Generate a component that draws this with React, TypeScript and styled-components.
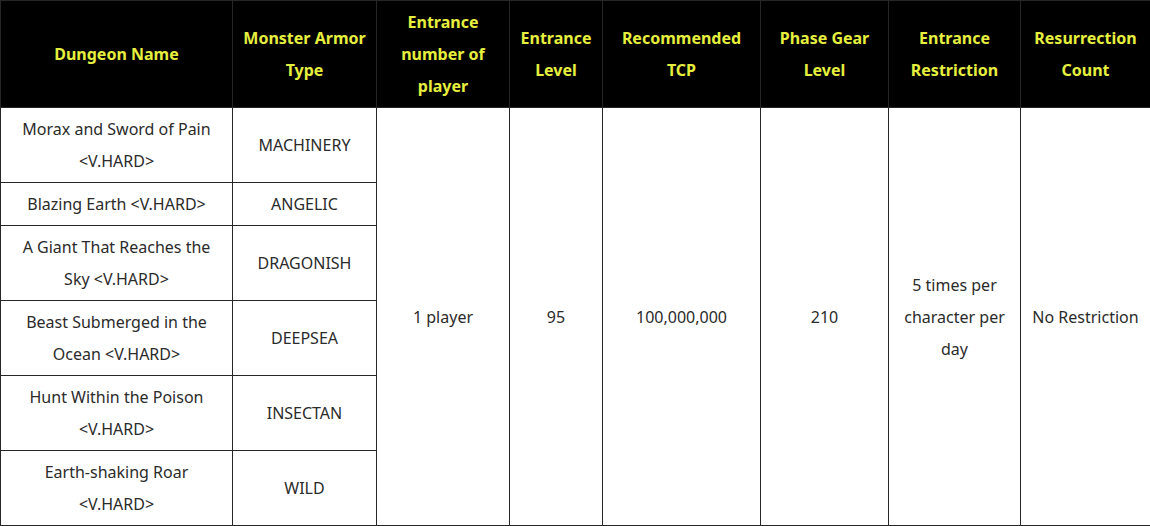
import styled, { createGlobalStyle } from 'styled-components';

const GlobalStyle = createGlobalStyle`
  html, body {
    margin: 0;
    padding: 0;
    background: #ffffff;
  }
  body {
    font-family: 'Noto Sans', 'Open Sans', sans-serif;
  }
`;

const Table = styled.table`
  width: 1150px;
  border-collapse: collapse;
  table-layout: fixed;
  font-family: 'Noto Sans', 'Open Sans', sans-serif;
  font-size: 16px;
  line-height: 32px;
  color: #2b2b2b;
`;

const HeadCell = styled.th`
  background: #000000;
  color: #e6ef3e;
  font-weight: 700;
  text-align: center;
  vertical-align: middle;
  padding: 5px 10px;
  border: 1px solid #262626;
`;

const Cell = styled.td`
  text-align: center;
  vertical-align: middle;
  padding: 5px 10px;
  border: 1px solid #262626;
  background: #ffffff;
`;

interface Dungeon {
  name: string;
  armor: string;
}

const dungeons: Dungeon[] = [
  { name: 'Morax and Sword of Pain <V.HARD>', armor: 'MACHINERY' },
  { name: 'Blazing Earth <V.HARD>', armor: 'ANGELIC' },
  { name: 'A Giant That Reaches the Sky <V.HARD>', armor: 'DRAGONISH' },
  { name: 'Beast Submerged in the Ocean <V.HARD>', armor: 'DEEPSEA' },
  { name: 'Hunt Within the Poison <V.HARD>', armor: 'INSECTAN' },
  { name: 'Earth-shaking Roar <V.HARD>', armor: 'WILD' },
];

const columns = [
  { label: 'Dungeon Name', width: 232 },
  { label: 'Monster Armor Type', width: 144 },
  { label: 'Entrance number of player', width: 133 },
  { label: 'Entrance Level', width: 93 },
  { label: 'Recommended TCP', width: 158 },
  { label: 'Phase Gear Level', width: 128 },
  { label: 'Entrance Restriction', width: 132 },
  { label: 'Resurrection Count', width: 130 },
];

export default function App() {
  const span = dungeons.length;
  return (
    <>
      <GlobalStyle />
      <Table>
        <colgroup>
          {columns.map((c) => (
            <col key={c.label} style={{ width: c.width }} />
          ))}
        </colgroup>
        <thead>
          <tr>
            {columns.map((c) => (
              <HeadCell key={c.label}>{c.label}</HeadCell>
            ))}
          </tr>
        </thead>
        <tbody>
          {dungeons.map((d, i) => (
            <tr key={d.name}>
              <Cell>{d.name}</Cell>
              <Cell>{d.armor}</Cell>
              {i === 0 && (
                <>
                  <Cell rowSpan={span}>1 player</Cell>
                  <Cell rowSpan={span}>95</Cell>
                  <Cell rowSpan={span}>100,000,000</Cell>
                  <Cell rowSpan={span}>210</Cell>
                  <Cell rowSpan={span}>5 times per character per day</Cell>
                  <Cell rowSpan={span}>No Restriction</Cell>
                </>
              )}
            </tr>
          ))}
        </tbody>
      </Table>
    </>
  );
}
